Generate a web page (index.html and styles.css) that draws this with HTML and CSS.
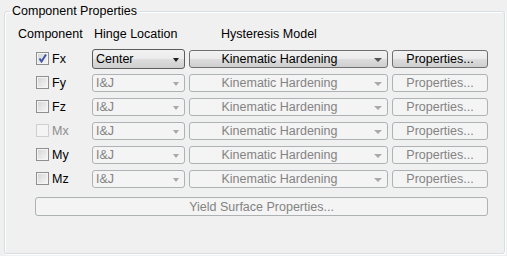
FILE: index.html
```html
<!DOCTYPE html>
<html lang="en">
<head>
    <title>Component Properties</title>
    <link rel="stylesheet" href="styles.css">
</head>
<body>
    <fieldset class="group">
        <legend>Component Properties</legend>
        <div class="grid head">
            <span class="h-comp">Component</span>
            <span class="h-hinge">Hinge Location</span>
            <span class="h-hyst">Hysteresis Model</span>
        </div>
        <div class="grid row">
            <label class="chk"><span class="box on"><svg width="11" height="11" viewBox="0 0 11 11"><path d="M2.5 5.5 L4.5 8.5 L9 1.5" fill="none" stroke="#3d56a6" stroke-width="2"/></svg></span>Fx</label>
            <div class="combo hinge active"><span class="val">Center</span><i class="arrow"></i></div>
            <div class="combo hyst"><span class="val">Kinematic Hardening</span><i class="arrow"></i></div>
            <button class="btn">Properties...</button>
        </div>
        <div class="grid row">
            <label class="chk"><span class="box"></span>Fy</label>
            <div class="combo hinge off"><span class="val">I&amp;J</span><i class="arrow"></i></div>
            <div class="combo hyst off"><span class="val">Kinematic Hardening</span><i class="arrow"></i></div>
            <button class="btn off">Properties...</button>
        </div>
        <div class="grid row">
            <label class="chk"><span class="box"></span>Fz</label>
            <div class="combo hinge off"><span class="val">I&amp;J</span><i class="arrow"></i></div>
            <div class="combo hyst off"><span class="val">Kinematic Hardening</span><i class="arrow"></i></div>
            <button class="btn off">Properties...</button>
        </div>
        <div class="grid row">
            <label class="chk dis"><span class="box"></span>Mx</label>
            <div class="combo hinge off"><span class="val">I&amp;J</span><i class="arrow"></i></div>
            <div class="combo hyst off"><span class="val">Kinematic Hardening</span><i class="arrow"></i></div>
            <button class="btn off">Properties...</button>
        </div>
        <div class="grid row">
            <label class="chk"><span class="box"></span>My</label>
            <div class="combo hinge off"><span class="val">I&amp;J</span><i class="arrow"></i></div>
            <div class="combo hyst off"><span class="val">Kinematic Hardening</span><i class="arrow"></i></div>
            <button class="btn off">Properties...</button>
        </div>
        <div class="grid row">
            <label class="chk"><span class="box"></span>Mz</label>
            <div class="combo hinge off"><span class="val">I&amp;J</span><i class="arrow"></i></div>
            <div class="combo hyst off"><span class="val">Kinematic Hardening</span><i class="arrow"></i></div>
            <button class="btn off">Properties...</button>
        </div>
        <button class="btn off yield">Yield Surface Properties...</button>
    </fieldset>
</body>
</html>
```

FILE: styles.css
```css
body {
    margin: 0;
    width: 507px;
    height: 256px;
    background-color: #f0f0f0;
    font-family: "Liberation Sans", Arial, sans-serif;
    font-size: 12.5px;
    line-height: 16px;
    color: #000;
    overflow: hidden;
}
.group {
    box-sizing: border-box;
    margin: 3px 0 0 4px;
    padding: 0;
    width: 501px;
    height: 251px;
    border: 1px solid #d5dfe5;
    border-radius: 3px;
    box-shadow: inset 1px 1px 0 #fff, 1px 1px 0 #fff;
}
.group legend {
    margin-left: 5px;
    padding: 0 2px;
    line-height: 16px;
}
.grid {
    display: grid;
    grid-template-columns: 52px 93px 199px 96px;
    column-gap: 4px;
    padding-left: 31px;
}
.head {
    margin-top: 7px;
    height: 16px;
    margin-bottom: 7px;
}
.h-comp {
    margin-left: -18px;
    white-space: nowrap;
}
.h-hinge {
    padding-left: 2px;
    white-space: nowrap;
}
.h-hyst {
    padding-left: 32px;
    white-space: nowrap;
}
.row {
    height: 20px;
    margin-bottom: 4px;
    align-items: center;
}
.chk {
    display: flex;
    align-items: center;
    height: 20px;
}
.chk.dis {
    color: #8d8d8d;
}
.box {
    box-sizing: border-box;
    display: inline-block;
    width: 13px;
    height: 13px;
    margin-right: 3px;
    border: 1px solid #8e8f8f;
    background: linear-gradient(135deg, #d4d4d4, #f8f8f8);
    box-shadow: inset 0 0 0 1px #f4f4f4;
    margin-top: -1px;
}
.box svg {
    display: block;
}
.chk.dis .box {
    border-color: #cfcfcf;
    background: #f4f4f4;
    box-shadow: none;
}
.combo {
    box-sizing: border-box;
    display: flex;
    align-items: center;
    height: 18px;
    border: 1px solid #707070;
    border-radius: 3px;
    background: linear-gradient(#f2f2f2 0%, #ebebeb 50%, #dddddd 51%, #cfcfcf 100%);
    white-space: nowrap;
}
.combo.active {
    height: 20px;
    border-color: #5c5c5c;
}
.combo .val {
    flex: 1;
    padding-left: 3px;
}
.combo.hyst .val {
    text-align: center;
    padding-left: 0;
    padding-right: 1px;
}
.arrow {
    width: 0;
    height: 0;
    margin: 2px 5px 0 4px;
    border-left: 4px solid transparent;
    border-right: 4px solid transparent;
    border-top: 4px solid #1e1e1e;
}
.combo.hinge .arrow {
    border-left-width: 3.5px;
    border-right-width: 3.5px;
    margin-right: 5px;
}
.combo.hyst .arrow {
    border-top-color: #555;
}
.combo.off {
    background: #f4f4f4;
    border-color: #adb2b5;
    color: #838383;
}
.combo.off .arrow {
    border-top-color: #a9a9a9;
}
.btn {
    box-sizing: border-box;
    height: 18px;
    padding: 0;
    margin: 0;
    font: inherit;
    line-height: 16px;
    color: #000;
    border: 1px solid #707070;
    border-radius: 3px;
    background: linear-gradient(#f2f2f2 0%, #ebebeb 50%, #dddddd 51%, #cfcfcf 100%);
}
.btn.off {
    background: #f4f4f4;
    border-color: #adb2b5;
    color: #838383;
}
.yield {
    display: block;
    margin: 8px 0 0 30px;
    width: 453px;
    height: 19px;
}
```
